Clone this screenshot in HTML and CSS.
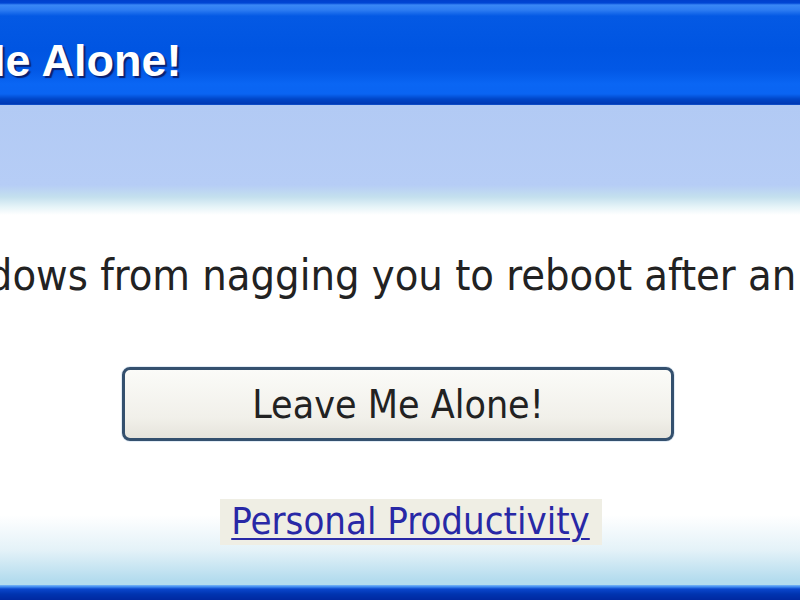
FILE: index.html
```html
<!DOCTYPE html>
<html lang="en">
<head>
<meta charset="UTF-8">
<meta name="viewport" content="width=device-width, initial-scale=1.0">
<title>Leave Me Alone!</title>
<link rel="stylesheet" href="styles.css">
</head>
<body>
<div class="window">
  <div class="titlebar">
    <span class="title">Leave Me Alone!</span>
  </div>
  <div class="banner"></div>
  <div class="content">
    <p class="desc">Stop Windows from nagging you to reboot after an update.</p>
    <button class="big-button" type="button">Leave Me Alone!</button>
    <a class="link-box" href="#">Personal Productivity</a>
  </div>
  <div class="frame-bottom"></div>
</div>
</body>
</html>
```

FILE: styles.css
```css
body {
    margin: 0;
    padding: 0;
    background-color: #fff;
    font-family: "DejaVu Sans Condensed", "DejaVu Sans", sans-serif;
    font-stretch: condensed;
}

.window {
    width: 800px;
    height: 600px;
    overflow: hidden;
    display: flex;
    flex-direction: column;
}

/* XP style caption bar */
.titlebar {
    height: 105px;
    flex-shrink: 0;
    display: flex;
    align-items: center;
    overflow: hidden;
    background: linear-gradient(to bottom,
        #0040cc 0px, #0046d4 3px, #3a88f6 5px, #2d7cf2 10px,
        #0459e4 16px, #0055e2 50px, #0258e6 70px, #0a66f4 84px,
        #0a64f2 94px, #0046c8 99px, #0038b4 104px, #1a5ed6 105px);
}

.title {
    font-family: "Liberation Sans", Arial, sans-serif;
    font-weight: bold;
    font-size: 45px;
    color: #fff;
    white-space: nowrap;
    margin-left: -172px;
    margin-top: 16px;
    text-shadow: 2px 2px 1px #0a2070;
}

.banner {
    height: 110px;
    flex-shrink: 0;
    background: linear-gradient(to bottom,
        #b2caf4 0px, #b6cdf6 80px, #c4e0ee 92px, #e6f4f8 102px, #fff 110px);
}

.content {
    flex: 1;
    display: flex;
    flex-direction: column;
    align-items: center;
    overflow: hidden;
    background: linear-gradient(to bottom,
        #fff 0px, #fff 300px, #e4f2f8 335px, #b4dcee 365px);
}

.desc {
    align-self: flex-start;
    margin: 35px 0 0 -185px;
    font-size: 43px;
    line-height: 50px;
    color: #222;
    white-space: nowrap;
}

.big-button {
    width: 552px;
    height: 74px;
    margin-top: 67px;
    margin-left: -4px;
    padding: 0;
    border: 3px solid #34506e;
    border-radius: 8px;
    background: linear-gradient(to bottom, #fbfbf8, #f1f0ea 70%, #e6e4dc);
    box-shadow: 0 0 0 1px #e2ecf6;
    font-family: inherit;
    font-stretch: condensed;
    font-size: 39px;
    color: #222;
    cursor: pointer;
}

.link-box {
    margin-top: 58px;
    margin-left: 22px;
    padding: 2px 12px 4px 11px;
    background-color: #efeee4;
    font-size: 38px;
    line-height: 40px;
    color: #2828a6;
    text-decoration: underline;
    text-decoration-thickness: 2px;
    text-underline-offset: 4px;
}

.frame-bottom {
    height: 15px;
    flex-shrink: 0;
    background: linear-gradient(to bottom,
        #7ab8f6 0px, #3c86ee 2px, #0a46cc 4px, #0034b0 9px, #0028a0 15px);
}
```
